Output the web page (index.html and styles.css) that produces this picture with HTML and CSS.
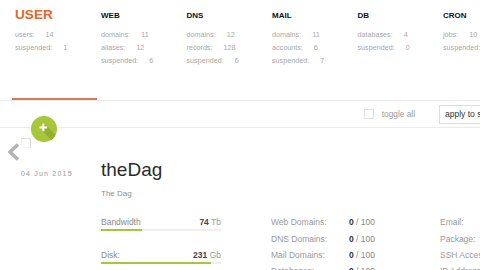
FILE: index.html
```html
<!DOCTYPE html>
<html>
<head>
<meta charset="utf-8">
<link rel="stylesheet" href="styles.css">
</head>
<body>
<header class="top">
  <div class="tab active">
    <div class="tab-title user">USER</div>
    <div class="stat">users:<b>14</b></div>
    <div class="stat">suspended:<b>1</b></div>
  </div>
  <div class="tab">
    <div class="tab-title">WEB</div>
    <div class="stat">domains:<b>11</b></div>
    <div class="stat">aliases:<b>12</b></div>
    <div class="stat">suspended:<b>6</b></div>
  </div>
  <div class="tab">
    <div class="tab-title">DNS</div>
    <div class="stat">domains:<b>12</b></div>
    <div class="stat">records:<b>128</b></div>
    <div class="stat">suspended:<b>6</b></div>
  </div>
  <div class="tab">
    <div class="tab-title">MAIL</div>
    <div class="stat">domains:<b>11</b></div>
    <div class="stat">accounts:<b>6</b></div>
    <div class="stat">suspended:<b>7</b></div>
  </div>
  <div class="tab">
    <div class="tab-title">DB</div>
    <div class="stat">databases:<b>4</b></div>
    <div class="stat">suspended:<b>0</b></div>
  </div>
  <div class="tab">
    <div class="tab-title">CRON</div>
    <div class="stat">jobs:<b>10</b></div>
    <div class="stat">suspended:<b>0</b></div>
  </div>
</header>

<div class="toolbar">
  <div class="actions">
    <span class="checkbox"></span>
    <span class="toggle">toggle all</span>
    <div class="select">apply to selected</div>
  </div>
</div>

<a class="add-btn" href="#" aria-label="add">
  <svg width="26" height="26" viewBox="0 0 26 26">
    <defs><clipPath id="c"><circle cx="13" cy="13" r="13"/></clipPath></defs>
    <circle cx="13" cy="13" r="13" fill="#a7c63a"/>
    <polygon clip-path="url(#c)" points="13.4,7.6 33.4,27.6 31.2,35 11.2,15" fill="#93b12c"/>
    <rect x="11.3" y="7.6" width="2.1" height="7.6" fill="#fff"/>
    <rect x="8.5" y="10.4" width="7.6" height="2.1" fill="#fff"/>
  </svg>
</a>

<main class="item">
  <div class="item-left">
    <div class="controls">
      <svg class="back" width="13" height="18" viewBox="0 0 13 18">
        <polyline points="11,1.5 3,9 11,16.5" fill="none" stroke="#b3b3b3" stroke-width="3.4"/>
      </svg>
      <span class="box"></span>
    </div>
    <div class="date">04 Jun 2015</div>
  </div>
  <div class="item-main">
    <div class="name">theDag</div>
    <div class="alias">The Dag</div>
    <div class="stats">
      <div class="usage">
        <div class="meter">
          <div class="meter-head"><span class="mlabel">Bandwidth</span><span class="mval"><b>74</b> Tb</span></div>
          <div class="track"><div class="fill" style="width:34%"></div></div>
        </div>
        <div class="meter">
          <div class="meter-head"><span class="mlabel">Disk:</span><span class="mval"><b>231</b> Gb</span></div>
          <div class="track"><div class="fill" style="width:92%"></div></div>
        </div>
        <div class="sub"><span>Web: <b>123</b> Gb</span><span>Databases: <b>40</b> Gb</span></div>
      </div>
      <div class="limits">
        <div class="row"><span class="lbl">Web Domains:</span><span class="val"><b>0</b> / 100</span></div>
        <div class="row"><span class="lbl">DNS Domains:</span><span class="val"><b>0</b> / 100</span></div>
        <div class="row"><span class="lbl">Mail Domains:</span><span class="val"><b>0</b> / 100</span></div>
        <div class="row"><span class="lbl">Databases:</span><span class="val"><b>0</b> / 100</span></div>
      </div>
      <div class="info">
        <div class="row"><span class="lbl">Email:</span></div>
        <div class="row"><span class="lbl">Package:</span></div>
        <div class="row"><span class="lbl">SSH Access:</span></div>
        <div class="row"><span class="lbl">IP Addresses:</span></div>
      </div>
    </div>
  </div>
</main>
</body>
</html>
```

FILE: styles.css
```css
html, body {
  margin: 0;
  padding: 0;
}
body {
  width: 480px;
  height: 270px;
  overflow: hidden;
  position: relative;
  background: #fff;
  font-family: "Liberation Sans", Arial, sans-serif;
  color: #333;
}

/* top nav */
.top {
  display: flex;
  height: 100px;
  padding-left: 12px;
  border-bottom: 1px solid #ebebeb;
}
.tab {
  flex: 0 0 85.5px;
  box-sizing: border-box;
  padding-left: 4px;
  height: 100px;
  white-space: nowrap;
}
.tab.active {
  flex-basis: 85px;
  padding-left: 3px;
  border-bottom: 2px solid #e27559;
}
.tab-title {
  height: 16px;
  margin-top: 7.3px;
  margin-bottom: 5.2px;
  font-size: 8px;
  line-height: 18px;
  font-weight: bold;
  color: #111;
}
.tab-title.user {
  font-size: 13.6px;
  line-height: 16px;
  color: #e5672c;
}
.stat {
  font-size: 7.2px;
  line-height: 13px;
  color: #a8a8a8;
}
.stat b {
  font-weight: normal;
  margin-left: 11px;
}

/* toolbar */
.toolbar {
  display: flex;
  align-items: center;
  height: 26px;
  border-bottom: 1px solid #ebebeb;
  overflow: hidden;
}
.actions {
  display: flex;
  align-items: center;
  margin-left: auto;
  margin-right: -66px;
}
.checkbox {
  width: 8px;
  height: 8px;
  border: 1px solid #e0e0e0;
}
.toggle {
  margin-left: 7.5px;
  font-size: 8.3px;
  color: #9a9a9a;
}
.select {
  margin-left: 24px;
  width: 100px;
  height: 17px;
  box-sizing: content-box;
  border: 1px solid #dcdcdc;
  padding-left: 5px;
  font-size: 8.5px;
  line-height: 17px;
  color: #333;
  white-space: nowrap;
}

/* floating add button */
.add-btn {
  position: absolute;
  left: 30.7px;
  top: 116px;
  width: 26px;
  height: 26px;
  display: block;
}
.add-btn svg {
  display: block;
}

/* list item */
.item {
  display: flex;
}
.item-left {
  flex: 0 0 101px;
  padding-top: 10px;
}
.controls {
  display: flex;
  align-items: flex-start;
  height: 24px;
}
.back {
  display: block;
  margin-left: 7px;
  margin-top: 5px;
}
.box {
  width: 8px;
  height: 8px;
  margin-left: 1px;
  border: 1px solid #dedede;
  border-left-color: #f2f2f2;
  border-bottom-color: #f2f2f2;
}
.date {
  margin-top: 6.7px;
  padding-left: 21px;
  font-size: 7px;
  line-height: 10px;
  letter-spacing: 1.2px;
  color: #9a9a9a;
  white-space: nowrap;
}

.item-main {
  flex: 1;
  padding-top: 31.3px;
  min-width: 0;
}
.name {
  font-size: 19px;
  line-height: 22px;
  color: #2b2b2b;
}
.alias {
  margin-top: 7.4px;
  font-size: 8px;
  line-height: 10px;
  color: #8f8f8f;
}
.stats {
  display: flex;
  margin-top: 15.5px;
  white-space: nowrap;
}
.usage {
  flex: 0 0 120px;
  margin-right: 50px;
}
.meter {
  height: 32.66px;
  box-sizing: border-box;
  padding-top: 2px;
}
.meter-head {
  display: flex;
  justify-content: space-between;
  font-size: 8.5px;
  line-height: 12px;
}
.mlabel {
  color: #8a8a8a;
}
.mval {
  color: #999;
}
.mval b {
  color: #444;
}
.track {
  margin-top: 1px;
  height: 2px;
  background: #efefef;
}
.fill {
  height: 2px;
  background: #a7c63a;
}
.sub {
  display: flex;
  justify-content: space-between;
  margin-top: -16.33px;
  padding-top: 16.33px;
  font-size: 7.5px;
  line-height: 16.33px;
  color: #999;
}
.sub b {
  color: #555;
}
.limits {
  flex: 0 0 169px;
}
.info {
  flex: 1;
}
.row {
  display: flex;
  height: 16.33px;
  font-size: 8.5px;
  line-height: 16.33px;
}
.lbl {
  flex: 0 0 78px;
  color: #9a9a9a;
}
.val {
  color: #888;
}
.val b {
  color: #333;
}
```
